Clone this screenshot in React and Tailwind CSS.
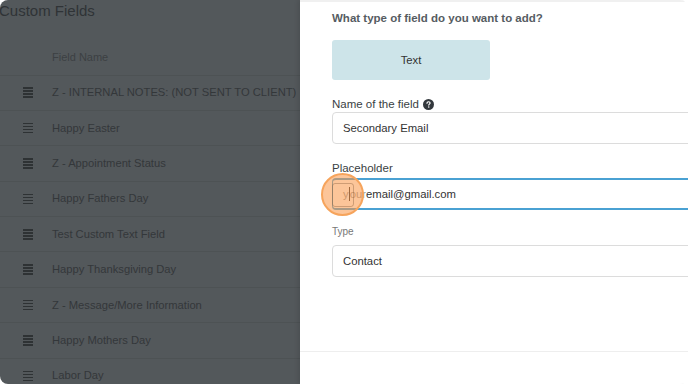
const rows = [
  'Z - INTERNAL NOTES: (NOT SENT TO CLIENT)',
  'Happy Easter',
  'Z - Appointment Status',
  'Happy Fathers Day',
  'Test Custom Text Field',
  'Happy Thanksgiving Day',
  'Z - Message/More Information',
  'Happy Mothers Day',
  'Labor Day',
]

function Grip() {
  return (
    <div className="flex flex-col gap-[1.5px] w-[10px]">
      <div className="h-[1.5px] bg-[#2e3234]" />
      <div className="h-[1.5px] bg-[#2e3234]" />
      <div className="h-[1.5px] bg-[#2e3234]" />
      <div className="h-[1.5px] bg-[#2e3234]" />
    </div>
  )
}

function QuestionIcon() {
  return (
    <svg width="11" height="11" viewBox="0 0 16 16" className="inline-block">
      <circle cx="8" cy="8" r="8" fill="#33383d" />
      <path d="M5.8 6.1c0-1.3 1-2.1 2.3-2.1s2.2.8 2.2 1.9c0 1.5-1.9 1.6-1.9 2.9" stroke="#fff" strokeWidth="1.8" fill="none" strokeLinecap="round" />
      <circle cx="8.4" cy="11.7" r="1.1" fill="#fff" />
    </svg>
  )
}

export default function App() {
  return (
    <div className="w-[688px] h-[384px] bg-white overflow-hidden" style={{ fontFamily: '"Liberation Sans", Arial, sans-serif' }}>
      <div className="flex w-full h-full rounded-[8px] overflow-hidden">
        {/* dimmed list behind the drawer */}
        <div className="w-[300px] shrink-0 bg-[#53585b] text-[#33373a]">
          <div className="h-[40px] -ml-[1px] pt-[1px] text-[15px] leading-[20px] text-[#2f3336]">Custom Fields</div>
          <div className="h-[34.5px] flex items-center pl-[52px] text-[11px] text-[#3c4043]">Field Name</div>
          {rows.map((r) => (
            <div key={r} className="h-[35.4px] flex items-center border-t border-[#4d5254] shrink-0">
              <div className="w-[52px] pl-[23px] shrink-0">
                <Grip />
              </div>
              <span className="text-[11.2px] whitespace-nowrap">{r}</span>
            </div>
          ))}
        </div>

        {/* drawer */}
        <div className="relative flex-1 bg-white border-t-[2px] border-[#f0f0f0] shadow-[-2px_0_4px_rgba(0,0,0,0.1)]">
          <div className="pl-[32px] pt-[8px] w-[420px]">
            <div className="text-[11.5px] font-bold text-[#565c62] leading-[16px]">What type of field do you want to add?</div>
            <div className="mt-[14px] w-[158px] h-[40px] rounded-[3px] bg-[#cde4e9] flex items-center justify-center text-[11.3px] text-[#333]">Text</div>

            <div className="mt-[16px] flex items-center gap-[4px] text-[11.5px] text-[#3a3f44] leading-[16px]">
              Name of the field <QuestionIcon />
            </div>
            <div className="h-[32px] border border-[#dcdcdc] rounded-[4px] flex items-center pl-[10px] text-[11.3px] text-[#333]">
              Secondary Email
            </div>

            <div className="mt-[16px] text-[11.5px] text-[#3a3f44] leading-[16px]">Placeholder</div>
            <div className="relative mt-[2px] h-[32px] border-y-[2px] border-l border-[#4aa1d3] rounded-[4px] flex items-center pl-[10px] text-[11.3px] text-[#333]">
              <span className="text-[#9a9a9a]">y</span>
              <span className="w-px h-[14px] bg-[#333]" />
              <span className="text-[#9a9a9a]">our</span>
              <span>email@gmail.com</span>
            </div>

            <div className="mt-[15px] text-[10px] text-[#777] leading-[14px]">Type</div>
            <div className="mt-[6px] h-[32px] border border-[#dcdcdc] rounded-[4px] flex items-center pl-[10px] text-[11.3px] text-[#333]">
              Contact
            </div>
          </div>

          <div className="mt-[74px] border-t border-[#eeeeee] h-[40px] flex justify-end">
            <div className="mt-[20px] w-[24px] h-[20px] border border-[#d8d8d8] rounded-tl-[4px] border-r-0 border-b-0" />
          </div>

          {/* click highlight */}
          <div className="absolute left-[21px] top-[171px] w-[43px] h-[43px] rounded-full bg-[rgba(250,150,70,0.55)] border-[2px] border-[#f6a45c] flex items-center justify-center">
            <div className="w-[22px] h-[24px] rounded-[3px] border border-[rgba(120,80,50,0.35)]" />
          </div>
        </div>
      </div>
    </div>
  )
}
